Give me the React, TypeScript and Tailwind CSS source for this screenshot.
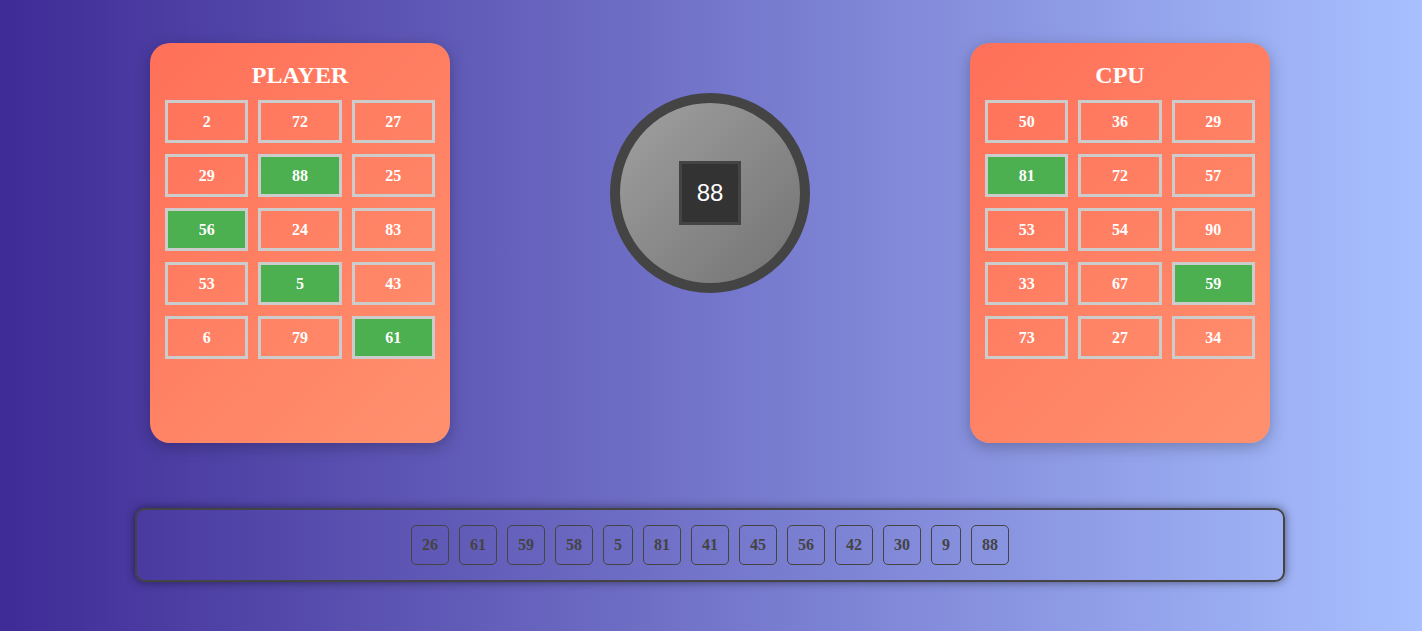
import React from 'react';

type Cell = { n: number; hit?: boolean };

const player: Cell[] = [
  { n: 2 }, { n: 72 }, { n: 27 },
  { n: 29 }, { n: 88, hit: true }, { n: 25 },
  { n: 56, hit: true }, { n: 24 }, { n: 83 },
  { n: 53 }, { n: 5, hit: true }, { n: 43 },
  { n: 6 }, { n: 79 }, { n: 61, hit: true },
];

const cpu: Cell[] = [
  { n: 50 }, { n: 36 }, { n: 29 },
  { n: 81, hit: true }, { n: 72 }, { n: 57 },
  { n: 53 }, { n: 54 }, { n: 90 },
  { n: 33 }, { n: 67 }, { n: 59, hit: true },
  { n: 73 }, { n: 27 }, { n: 34 },
];

const drawn = [26, 61, 59, 58, 5, 81, 41, 45, 56, 42, 30, 9, 88];

function Board({ title, cells }: { title: string; cells: Cell[] }) {
  return (
    <div className="w-[300px] h-[400px] rounded-[20px] bg-[linear-gradient(135deg,#ff7059,#ff916f)] shadow-[0_4px_15px_rgba(0,0,0,0.25)] px-[15px] pt-[17px]">
      <h2 className="text-center text-white font-bold text-[24px] leading-[30px] mb-[10px]">{title}</h2>
      <div className="grid grid-cols-3 gap-x-[10px] gap-y-[11px]">
        {cells.map((c, i) => (
          <div
            key={i}
            className={`h-[43px] border-[3px] border-[#cccccc] flex items-center justify-center text-white font-bold text-[16px] ${c.hit ? 'bg-[#4caf50]' : ''}`}
          >
            {c.n}
          </div>
        ))}
      </div>
    </div>
  );
}

export default function App() {
  return (
    <div
      className="min-h-screen w-full bg-[linear-gradient(to_right,#3f2b96,#a8c0ff)] pt-[43px]"
      style={{ fontFamily: '"Liberation Serif", "Times New Roman", serif' }}
    >
      <div className="flex justify-between items-start pl-[150px] pr-[152px]">
        <Board title="PLAYER" cells={player} />
        <div className="mt-[50px] w-[200px] h-[200px] rounded-full border-[10px] border-[#444444] bg-[linear-gradient(135deg,#a0a0a0,#737373)] flex items-center justify-center">
          <div
            className="bg-[#333333] border-[3px] border-[#444444] text-white text-[24px] leading-[28px] px-[15px] py-[15px]"
            style={{ fontFamily: '"Liberation Sans", Arial, sans-serif' }}
          >
            88
          </div>
        </div>
        <Board title="CPU" cells={cpu} />
      </div>

      <div className="ml-[135px] mt-[65px] w-[1150px] h-[74px] rounded-[10px] border-2 border-[#444444] shadow-[0_0_10px_rgba(0,0,0,0.5)] flex items-center justify-center gap-[10px]">
        {drawn.map((n, i) => (
          <div
            key={i}
            className="h-[40px] px-[10px] border border-[#444444] rounded-[5px] flex items-center justify-center text-[#444444] font-bold text-[16px]"
          >
            {n}
          </div>
        ))}
      </div>
    </div>
  );
}
